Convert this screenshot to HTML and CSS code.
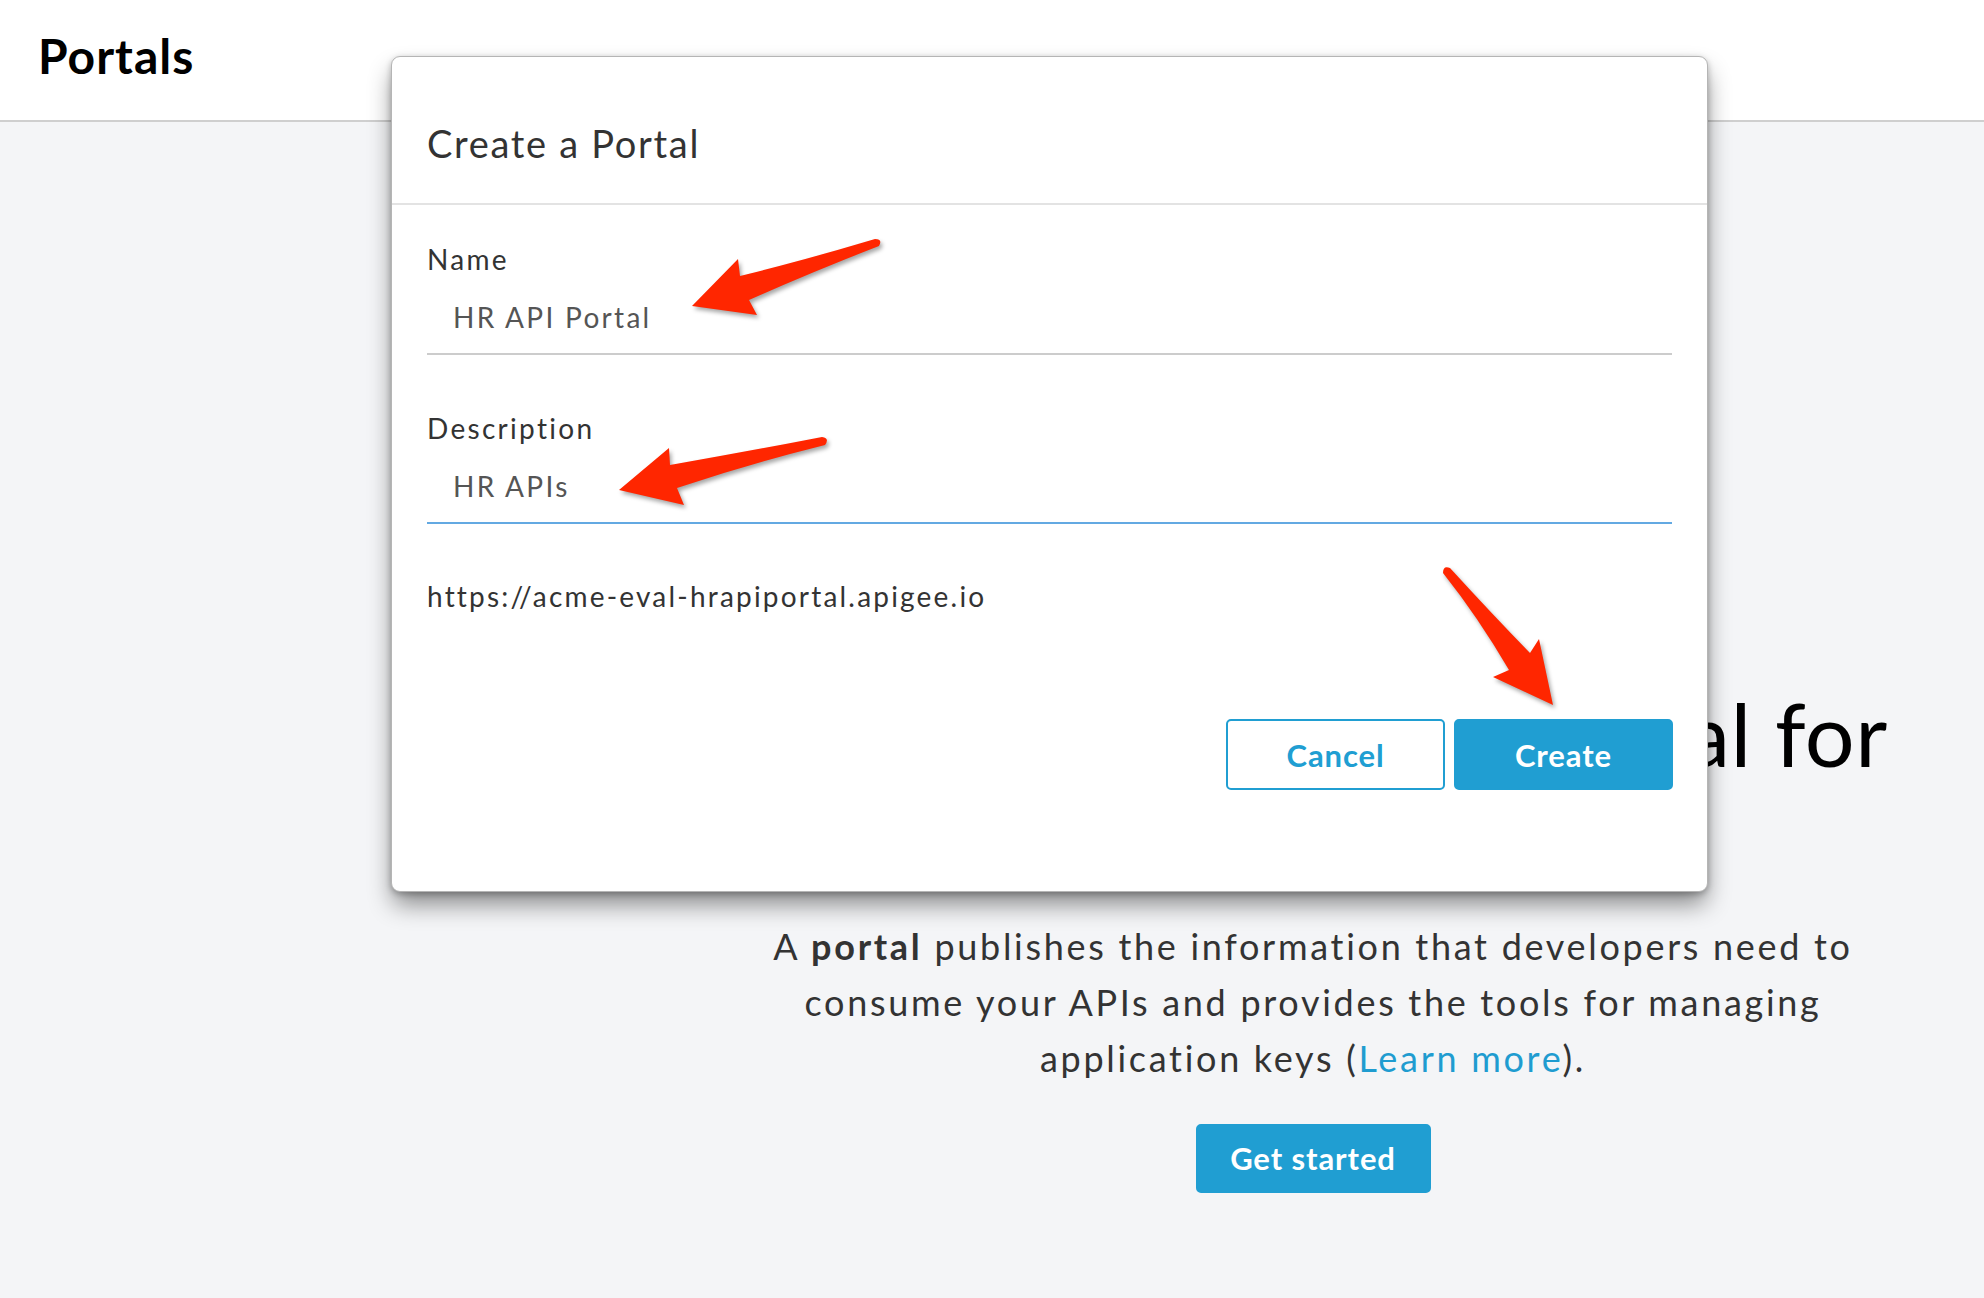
FILE: index.html
```html
<!DOCTYPE html>
<html lang="en">
<head>
<meta charset="utf-8">
<title>Portals</title>
<link rel="stylesheet" href="styles.css">
</head>
<body>
<header class="topbar">
  <h1 class="page-title">Portals</h1>
</header>
<main class="main">
  <div class="side"></div>
  <section class="landing">
    <h2 class="hero-title">Publish a developer portal for</h2>
    <p class="hero-text">A <strong>portal</strong> publishes the information that developers need to consume your APIs and provides the tools for managing application keys (<a href="#" class="link">Learn more</a>).</p>
    <button class="btn btn-primary btn-start">Get started</button>
  </section>
</main>

<div class="modal">
  <div class="modal-header">
    <h3 class="modal-title">Create a Portal</h3>
  </div>
  <div class="modal-body">
    <div class="field">
      <label class="field-label">Name</label>
      <div class="field-input">HR API Portal</div>
    </div>
    <div class="field">
      <label class="field-label">Description</label>
      <div class="field-input field-input-focus">HR APIs</div>
    </div>
    <div class="portal-url">https://acme-eval-hrapiportal.apigee.io</div>
    <div class="modal-actions">
      <button class="btn btn-outline">Cancel</button>
      <button class="btn btn-primary">Create</button>
    </div>
  </div>
</div>

<svg class="annotations" width="1984" height="1298" viewBox="0 0 1984 1298">
  <path class="arrow" d="M692,306 L738,259 L740,276 Q805,260 875,239 Q883,239 879,246 Q812,272 749,300 L757,315 Z"/>
  <path class="arrow" d="M619,490 L669,448 L670,465 Q750,451 822,437 Q830,438 825,445 Q752,463 677,488 L684,505 Z"/>
  <path class="arrow" d="M1553,705 L1493,677 L1509,670 Q1478,617 1443,573 Q1443,565 1450,568 Q1492,614 1530,653 L1539,639 Z"/>
</svg>
</body>
</html>
```
FILE: styles.css
```css
* { box-sizing: border-box; }

html, body {
  margin: 0;
  padding: 0;
}

body {
  font-family: Lato, "Open Sans", "Liberation Sans", sans-serif;
  background: #f4f5f7;
  color: #333;
  width: 1984px;
  height: 1298px;
  overflow: hidden;
  position: relative;
}

.topbar {
  background: #fff;
  height: 122px;
  border-bottom: 2px solid #cfcfcf;
  padding: 27px 0 0 38px;
}

.page-title {
  margin: 0;
  font-size: 48px;
  line-height: 58px;
  font-weight: 700;
  color: #000;
  letter-spacing: 1px;
}

.main {
  display: grid;
  grid-template-columns: 642px 1fr;
  min-height: 1176px;
}

.landing {
  text-align: center;
  padding-top: 559px;
}

.hero-title {
  margin: 0;
  font-size: 88px;
  line-height: 1.2;
  font-weight: 400;
  color: #000;
  white-space: nowrap;
  letter-spacing: 0.5px;
}

.hero-text {
  margin: 131px auto 0;
  max-width: 1130px;
  font-size: 36px;
  line-height: 56px;
  color: #333;
  letter-spacing: 2.7px;
}

.hero-text strong { font-weight: 700; }

.link {
  color: #1f9cd0;
  text-decoration: none;
}

.btn {
  font-family: Lato, "Open Sans", "Liberation Sans", sans-serif;
  font-weight: 700;
  font-size: 31px;
  letter-spacing: 0.9px;
  border-radius: 5px;
  cursor: pointer;
}

.btn-primary {
  background: #209ed2;
  color: #fff;
  border: 2px solid #209ed2;
}

.btn-outline {
  background: #fff;
  color: #209ed2;
  border: 2px solid #209ed2;
}

.btn-start {
  margin-top: 38px;
  width: 235px;
  height: 69px;
}

/* Modal */
.modal {
  position: absolute;
  left: 391px;
  top: 56px;
  width: 1317px;
  height: 836px;
  background: #fff;
  border: 1px solid #b5b5b5;
  border-radius: 9px;
  box-shadow: 0 14px 24px -2px rgba(0,0,0,0.45), 0 2px 6px rgba(0,0,0,0.25);
}

.modal-header {
  padding: 63px 35px 37px;
  border-bottom: 2px solid #e3e3e3;
}

.modal-title {
  margin: 0;
  font-size: 38px;
  line-height: 46px;
  font-weight: 400;
  color: #333;
  letter-spacing: 1.7px;
}

.modal-body {
  padding: 37px 35px 0;
}

.field + .field {
  margin-top: 56px;
}

.field-label {
  display: block;
  font-size: 28px;
  line-height: 34px;
  color: #333;
  letter-spacing: 2.3px;
}

.field-input {
  margin-top: 24px;
  padding: 0 0 19px 26px;
  font-size: 28px;
  line-height: 34px;
  color: #555;
  letter-spacing: 2.3px;
  border-bottom: 2px solid #cccccc;
}

.field-input-focus {
  border-bottom-color: #63a9e2;
}

.portal-url {
  margin-top: 55px;
  font-size: 28px;
  line-height: 34px;
  color: #333;
  letter-spacing: 2.2px;
}

.modal-actions {
  display: flex;
  justify-content: flex-end;
  gap: 9px;
  margin-top: 106px;
  margin-right: -1px;
}

.modal-actions .btn {
  width: 219px;
  height: 71px;
}

/* Annotation arrows */
.annotations {
  position: absolute;
  left: 0;
  top: 0;
  pointer-events: none;
}

.arrow {
  fill: #ff2600;
  filter: drop-shadow(2px 3px 2px rgba(0,0,0,0.35));
}
```
